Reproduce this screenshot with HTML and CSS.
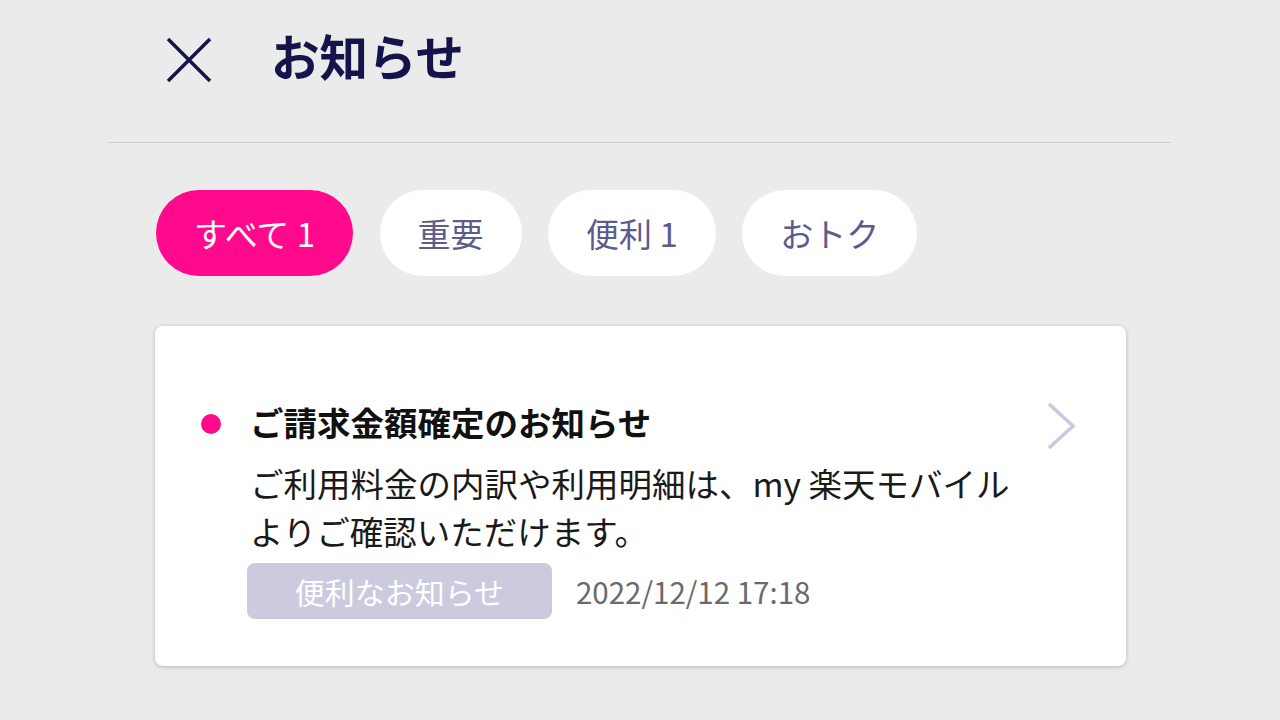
FILE: index.html
```html
<!DOCTYPE html>
<html lang="ja">
<head>
<meta charset="utf-8">
<link rel="stylesheet" href="styles.css">
</head>
<body>
<div class="page">
  <header class="header">
    <svg class="close" width="48" height="48" viewBox="0 0 48 48"><path d="M3 3 L45 45 M45 3 L3 45" stroke="#14144a" stroke-width="3.5" fill="none"/></svg>
    <h1 class="title">お知らせ</h1>
  </header>
  <nav class="tabs">
    <span class="tab active">すべて 1</span>
    <span class="tab">重要</span>
    <span class="tab">便利 1</span>
    <span class="tab">おトク</span>
  </nav>
  <div class="card">
    <span class="dot"></span>
    <div class="content">
      <div class="card-title">ご請求金額確定のお知らせ</div>
      <p class="card-body">ご利用料金の内訳や利用明細は、my 楽天モバイル<br>よりご確認いただけます。</p>
      <div class="meta">
        <span class="tag">便利なお知らせ</span>
        <span class="date">2022/12/12 17:18</span>
      </div>
    </div>
    <svg class="chevron" width="30" height="48" viewBox="0 0 30 48"><path d="M3 2 L27 24 L3 46" stroke="#c9c8e0" stroke-width="3.5" fill="none"/></svg>
  </div>
</div>
</body>
</html>
```
FILE: styles.css
```css
* { box-sizing: border-box; }
html, body { margin: 0; padding: 0; }
body {
  background: #ebebeb;
  font-family: "Noto Sans CJK JP", "Noto Sans", sans-serif;
  width: 1280px;
  height: 720px;
  overflow: hidden;
}
.page {
  width: 1063px;
  margin-left: 108px;
}
.header {
  height: 143px;
  border-bottom: 1.5px solid #cfcfcf;
  display: flex;
  align-items: flex-start;
  padding-left: 57px;
  padding-top: 35px;
}
.close { display: block; margin-top: 1px; }
.title {
  margin: -6px 0 0 58px;
  font-size: 48.5px;
  font-weight: 700;
  color: #14144a;
  line-height: 52px;
}
.tabs {
  display: flex;
  gap: 26.5px;
  padding-left: 48px;
  margin-top: 47px;
}
.tab {
  height: 86px;
  border-radius: 43px;
  background: #fff;
  color: #5d5b8c;
  font-size: 33px;
  display: flex;
  align-items: center;
  justify-content: center;
  padding: 0 38px;
}
.tab.active {
  background: #ff0a8c;
  color: #fff;
}
.card {
  margin-top: 50px;
  margin-left: 47px;
  width: 971px;
  background: #fff;
  border-radius: 8px;
  box-shadow: 0 1px 4px rgba(0,0,0,0.22);
  display: flex;
  align-items: flex-start;
  padding: 72px 50px 47px 46px;
}
.dot {
  width: 20px;
  height: 20px;
  border-radius: 50%;
  background: #ff0a8c;
  margin-top: 16px;
  flex: none;
}
.content {
  flex: 1;
  margin-left: 29px;
}
.card-title {
  font-size: 33.5px;
  font-weight: 700;
  line-height: 48px;
  color: #111;
}
.card-body {
  margin: 13px 0 0;
  font-size: 33.5px;
  line-height: 48px;
  color: #1a1a1a;
  white-space: nowrap;
}
.meta {
  display: flex;
  align-items: center;
  margin-top: 8px;
}
.tag {
  width: 305px;
  height: 56px;
  border-radius: 8px;
  background: #cbcadf;
  color: #fff;
  font-size: 30px;
  display: flex;
  align-items: center;
  justify-content: center;
  margin-left: -3px;
}
.date {
  margin-left: 24px;
  font-size: 29.5px;
  color: #6a6a6a;
}
.chevron { flex: none; margin-top: 4px; }
```
